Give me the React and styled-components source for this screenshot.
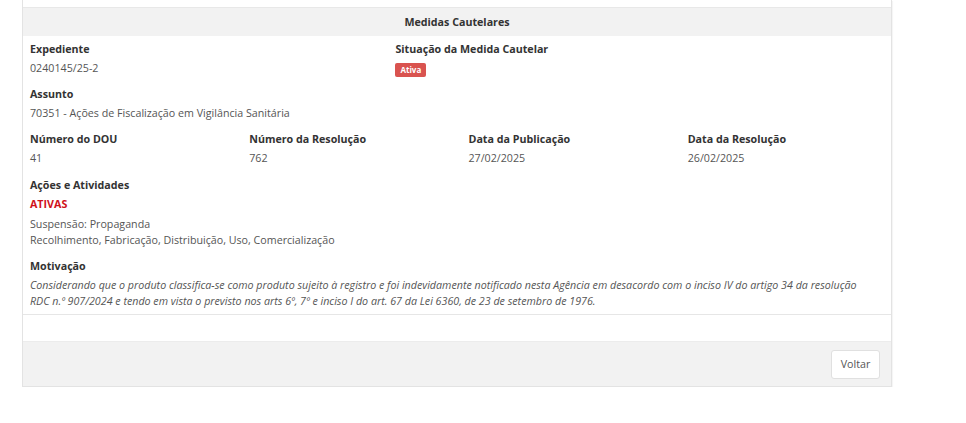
import React from "react";
import styled, { createGlobalStyle } from "styled-components";

const Global = createGlobalStyle`
  html, body { margin: 0; padding: 0; background: #fff; }
  body {
    font-family: "Open Sans", "Liberation Sans", Arial, sans-serif;
    font-size: 10.7px;
    line-height: 16px;
    color: #555;
  }
`;

const Page = styled.div`
  padding: 0 0 0 22px;
  width: 870px;
`;

const Panel = styled.div`
  border: 1px solid #e3e3e3;
  border-top: none;
  box-shadow: 1px 1px 1px rgba(0, 0, 0, 0.04);
  padding-top: 7px;
`;

const Section = styled.section`
  border-bottom: 1px solid #e6e6e6;
`;

const SectionTitle = styled.div`
  background: #f2f2f2;
  border-top: 1px solid #e8e8e8;
  height: 28px;
  line-height: 28px;
  text-align: center;
  font-weight: 700;
  color: #333;
`;

const Body = styled.div`
  padding: 5px 0 5px 7px;
`;

const Row = styled.div`
  display: grid;
  grid-template-columns: repeat(12, 73.08px);
  width: 877px;
`;

const Field = styled.div`
  grid-column: span ${(p) => p.$span};
  margin-bottom: ${(p) => (p.$gap !== undefined ? p.$gap : 10)}px;
`;

const Label = styled.div`
  font-weight: 700;
  color: #333;
  margin-bottom: 3px;
`;

const Value = styled.div`
  color: #555;
  font-style: ${(p) => (p.$italic ? "italic" : "normal")};
  padding-right: ${(p) => (p.$italic ? "40px" : "0")};
`;

const Badge = styled.span`
  display: inline-block;
  margin-top: 3px;
  background: #d9534f;
  color: #fff;
  font-size: 8px;
  font-weight: 700;
  line-height: 14px;
  height: 14px;
  padding: 0 5px;
  border-radius: 2px;
`;

const Status = styled.div`
  color: #d0111b;
  font-weight: 700;
  margin: 2px 0 4px;
`;

const Spacer = styled.div`
  height: 26px;
`;

const Footer = styled.div`
  background: #f2f2f2;
  border-top: 1px solid #ececec;
  height: 44px;
  display: flex;
  align-items: center;
  justify-content: flex-end;
  padding-right: 11px;
`;

const Button = styled.button`
  font-family: inherit;
  font-size: 10.7px;
  color: #555;
  background: #fff;
  border: 1px solid #e0e0e0;
  border-radius: 3px;
  height: 29px;
  width: 49px;
  padding: 0;
  cursor: pointer;
`;

export default function App() {
  return (
    <>
      <Global />
      <Page>
        <Panel>
          <Section>
            <SectionTitle>Medidas Cautelares</SectionTitle>
            <Body>
              <Row>
                <Field $span={5} $gap={9}>
                  <Label>Expediente</Label>
                  <Value>0240145/25-2</Value>
                </Field>
                <Field $span={7} $gap={9}>
                  <Label>Situação da Medida Cautelar</Label>
                  <Badge>Ativa</Badge>
                </Field>
              </Row>
              <Row>
                <Field $span={12}>
                  <Label>Assunto</Label>
                  <Value>70351 - Ações de Fiscalização em Vigilância Sanitária</Value>
                </Field>
              </Row>
              <Row>
                <Field $span={3} $gap={11}>
                  <Label>Número do DOU</Label>
                  <Value>41</Value>
                </Field>
                <Field $span={3} $gap={11}>
                  <Label>Número da Resolução</Label>
                  <Value>762</Value>
                </Field>
                <Field $span={3} $gap={11}>
                  <Label>Data da Publicação</Label>
                  <Value>27/02/2025</Value>
                </Field>
                <Field $span={3} $gap={11}>
                  <Label>Data da Resolução</Label>
                  <Value>26/02/2025</Value>
                </Field>
              </Row>
              <Row>
                <Field $span={12}>
                  <Label>Ações e Atividades</Label>
                  <Status>ATIVAS</Status>
                  <Value>Suspensão: Propaganda</Value>
                  <Value>Recolhimento, Fabricação, Distribuição, Uso, Comercialização</Value>
                </Field>
              </Row>
              <Row>
                <Field $span={12} $gap={0}>
                  <Label>Motivação</Label>
                  <Value $italic>
                    Considerando que o produto classifica-se como produto sujeito à registro e foi
                    indevidamente notificado nesta Agência em desacordo com o inciso IV do artigo 34
                    da resolução RDC n.º 907/2024 e tendo em vista o previsto nos arts 6º, 7º e inciso
                    I do art. 67 da Lei 6360, de 23 de setembro de 1976.
                  </Value>
                </Field>
              </Row>
            </Body>
          </Section>
          <Spacer />
          <Footer>
            <Button type="button">Voltar</Button>
          </Footer>
        </Panel>
      </Page>
    </>
  );
}
